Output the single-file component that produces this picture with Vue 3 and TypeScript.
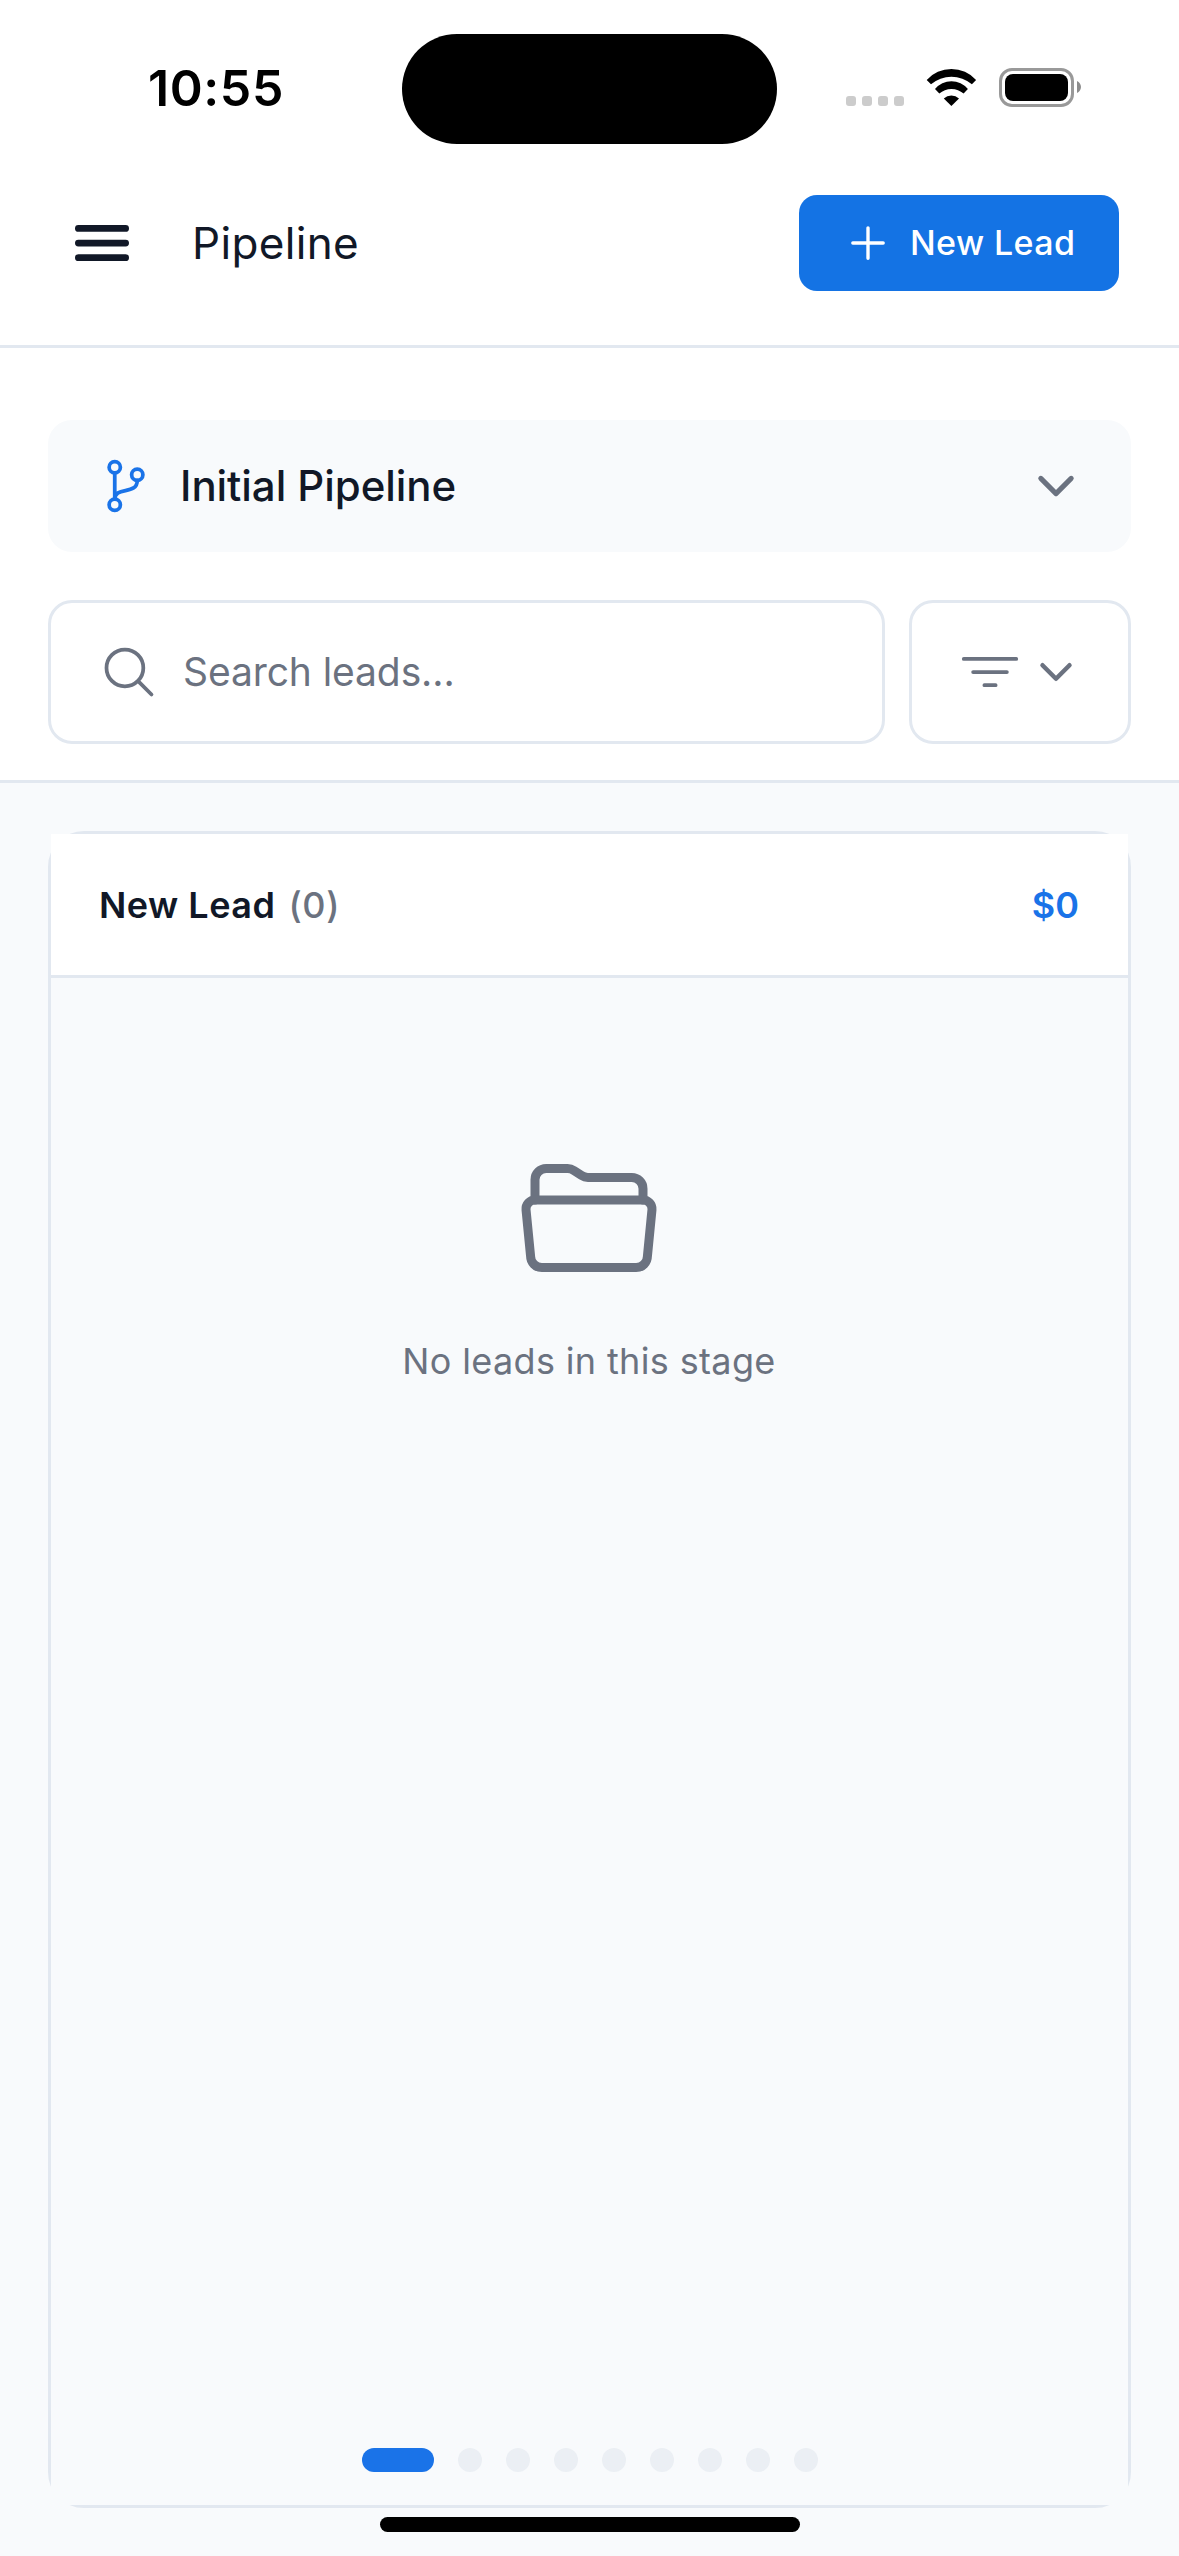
<script setup lang="ts">
import { ref } from 'vue'

interface Stage {
  name: string
  count: number
  total: string
}

const stage: Stage = { name: 'New Lead', count: 0, total: '$0' }
const pages = 9
const activePage = ref(1)
</script>

<template>
  <div class="screen">
    <div class="status">
      <span class="time">10:55</span>
      <div class="island"></div>
      <div class="signal"><i v-for="n in 4" :key="n"></i></div>
      <svg class="wifi" width="52" height="39" viewBox="0 0 52 39">
        <path d="M.7 12A33.2 33.2 0 0 1 50.1 12L45.9 16.3A31.4 31.4 0 0 0 5 16.3Z" />
        <path d="M9 21.1A21.2 21.2 0 0 1 41.9 21.1L37.6 25.6A18 18 0 0 0 13.3 25.6Z" />
        <path d="M17.8 30.4A11.5 11.5 0 0 1 33 30.4L25.4 38Z" />
      </svg>
      <div class="battery"><div class="charge"></div></div>
      <svg class="nub" width="4" height="12" viewBox="0 0 4 12"><path d="M0 0C2.400 1.200 4 3.400 4 6S2.400 10.800 0 12Z" /></svg>
    </div>

    <header class="header">
      <svg class="stroke menu" width="72" height="72" viewBox="0 0 512 512">
        <path d="M88 152h336M88 256h336M88 360h336" stroke-width="48" />
      </svg>
      <h1>Pipeline</h1>
      <button class="new">
        <svg class="stroke" width="54" height="54" viewBox="0 0 512 512">
          <path d="M256 112v288M400 256H112" stroke-width="32" />
        </svg>
        <span>New Lead</span>
      </button>
    </header>

    <section class="tools">
      <div class="selector">
        <svg class="stroke branch" width="60" height="60" viewBox="0 0 512 512">
          <g stroke-width="32">
            <circle cx="160" cy="96" r="48" />
            <circle cx="160" cy="416" r="48" />
            <circle cx="352" cy="160" r="48" />
            <path d="M160 368V144M352 208c0 128-192 48-192 160" />
          </g>
        </svg>
        <span>Initial Pipeline</span>
        <svg class="stroke" width="54" height="54" viewBox="0 0 512 512">
          <path d="M112 184l144 144 144-144" stroke-width="48" />
        </svg>
      </div>
      <div class="row">
        <div class="search">
          <svg class="stroke" width="60" height="60" viewBox="0 0 512 512">
            <path d="M221.090 64a157.090 157.090 0 1 0 157.090 157.090A157.100 157.100 0 0 0 221.090 64zM338.290 338.290L448 448" stroke-width="32" />
          </svg>
          <span>Search leads...</span>
        </div>
        <div class="filter">
          <svg class="stroke" width="60" height="60" viewBox="0 0 512 512">
            <path d="M32 144h448M112 256h288M208 368h96" stroke-width="32" />
          </svg>
          <svg class="stroke" width="48" height="48" viewBox="0 0 512 512">
            <path d="M112 184l144 144 144-144" stroke-width="48" />
          </svg>
        </div>
      </div>
    </section>

    <main class="board">
      <section class="column">
        <div class="column-head">
          <strong>{{ stage.name }}</strong>
          <span class="count">({{ stage.count }})</span>
          <span class="total">{{ stage.total }}</span>
        </div>
        <div class="column-body">
          <svg class="stroke" width="144" height="144" viewBox="0 0 512 512">
            <g stroke-width="32">
              <path d="M64 192v-72a40 40 0 0 1 40-40h75.890a40 40 0 0 1 22.190 6.720l27.840 18.560a40 40 0 0 0 22.190 6.720H408a40 40 0 0 1 40 40v40" />
              <path d="M479.900 226.550L463.680 392a40 40 0 0 1-39.930 40H88.250a40 40 0 0 1-39.930-40L32.100 226.550A32 32 0 0 1 64 192h384.100a32 32 0 0 1 31.800 34.550z" />
            </g>
          </svg>
          <p>No leads in this stage</p>
        </div>
      </section>
      <div class="pager">
        <i v-for="n in pages" :key="n" :class="{ active: n === activePage }"></i>
      </div>
      <div class="home"></div>
    </main>
  </div>
</template>

<style>
body {
  margin: 0;
  background: #f8fafc;
}
</style>

<style scoped>
.screen {
  width: 1179px;
  height: 2556px;
  display: flex;
  flex-direction: column;
  overflow: hidden;
  background: #fff;
  color: #111827;
  font-family: Inter, "Liberation Sans", sans-serif;
}
.screen * {
  box-sizing: border-box;
}
svg {
  display: block;
  flex: none;
}
.stroke {
  fill: none;
  stroke: currentColor;
  stroke-linecap: round;
  stroke-linejoin: round;
}
.status {
  height: 177px;
  flex: none;
  display: flex;
  align-items: flex-start;
  padding-left: 148px;
  color: #000;
}
.time {
  width: 254px;
  margin-top: 58px;
  font-size: 50px;
  line-height: 60px;
  font-weight: 600;
  letter-spacing: 0.6px;
}
.island {
  width: 375px;
  height: 110px;
  margin-top: 34px;
  border-radius: 55px;
  background: #000;
}
.signal {
  display: flex;
  gap: 6px;
  margin: 96px 0 0 69px;
}
.signal i {
  width: 10px;
  height: 10px;
  border-radius: 3px;
  background: #ccc;
}
.wifi {
  margin: 68px 0 0 22px;
}
.battery {
  width: 75px;
  height: 39px;
  margin: 68px 0 0 21px;
  padding: 3px;
  border: 3px solid #999;
  border-radius: 13px;
}
.charge {
  height: 100%;
  border-radius: 8px;
  background: #000;
}
.nub {
  margin: 81px 0 0 3px;
  fill: #8c8c8c;
}
.header {
  height: 171px;
  flex: none;
  display: flex;
  align-items: center;
  padding: 18px 60px 54px 66px;
  border-bottom: 3px solid #e2e8f0;
}
h1 {
  flex: 1;
  margin: 0 0 0 54px;
  font-size: 44px;
  font-weight: 400;
  letter-spacing: 0.35px;
}
.new {
  width: 320px;
  height: 96px;
  display: flex;
  align-items: center;
  gap: 15px;
  padding: 0 0 0 42px;
  border: 0;
  border-radius: 18px;
  background: #1473e4;
  color: #fff;
  font: 500 34px Inter, "Liberation Sans", sans-serif;
  letter-spacing: 0.4px;
  white-space: nowrap;
}
.new span,
.search span {
  padding-bottom: 2px;
}
.tools {
  flex: none;
  display: flex;
  flex-direction: column;
  gap: 48px;
  padding: 72px 48px 36px;
  border-bottom: 3px solid #e2e8f0;
  color: #6b7280;
}
.selector {
  height: 132px;
  display: flex;
  align-items: center;
  padding: 0 48px;
  border-radius: 24px;
  background: #f8fafc;
}
.selector span {
  flex: 1;
  margin-left: 24px;
  padding-bottom: 2px;
  color: #111827;
  font-size: 42px;
  font-weight: 500;
  letter-spacing: -0.06px;
}
.branch {
  color: #1a73e8;
}
.row {
  display: flex;
  gap: 24px;
  height: 144px;
}
.search,
.filter {
  display: flex;
  align-items: center;
  border: 3px solid #e2e8f0;
  border-radius: 24px;
}
.search {
  flex: 1;
  gap: 24px;
  padding-left: 48px;
  font-size: 39px;
  letter-spacing: -0.1px;
}
.filter {
  gap: 12px;
  padding: 0 48px;
}
.board {
  position: relative;
  flex: 1;
  display: flex;
  padding: 48px;
  background: #f8fafc;
}
.column {
  flex: 1;
  display: flex;
  flex-direction: column;
  border: 3px solid #e2e8f0;
  border-radius: 36px;
}
.column-head {
  height: 144px;
  display: flex;
  align-items: center;
  padding: 0 49px 0 48px;
  border-bottom: 3px solid #e2e8f0;
  background: #fff;
  font-size: 36px;
}
.column-head strong {
  font-weight: 600;
  letter-spacing: 0.5px;
}
.count {
  margin-left: 13px;
  color: #6b7280;
  font-weight: 500;
  letter-spacing: 0.6px;
}
.total {
  margin-left: auto;
  color: #1a73e8;
  font-weight: 600;
}
.column-body {
  flex: 1;
  display: flex;
  flex-direction: column;
  align-items: center;
  padding: 168px 1px 0 0;
  background: #f8fafc;
  color: #6b7280;
}
.column-body p {
  margin: 47px 0 0;
  font-size: 36px;
  line-height: 48px;
  letter-spacing: 0.36px;
}
.pager {
  position: absolute;
  left: 0;
  right: 0;
  bottom: 84px;
  display: flex;
  justify-content: center;
  gap: 24px;
}
.pager i {
  width: 24px;
  height: 24px;
  border-radius: 12px;
  background: #ebeff4;
}
.pager .active {
  width: 72px;
  background: #1a73e8;
}
.home {
  position: absolute;
  left: 380px;
  bottom: 24px;
  width: 420px;
  height: 15px;
  border-radius: 8px;
  background: #000;
}
</style>
